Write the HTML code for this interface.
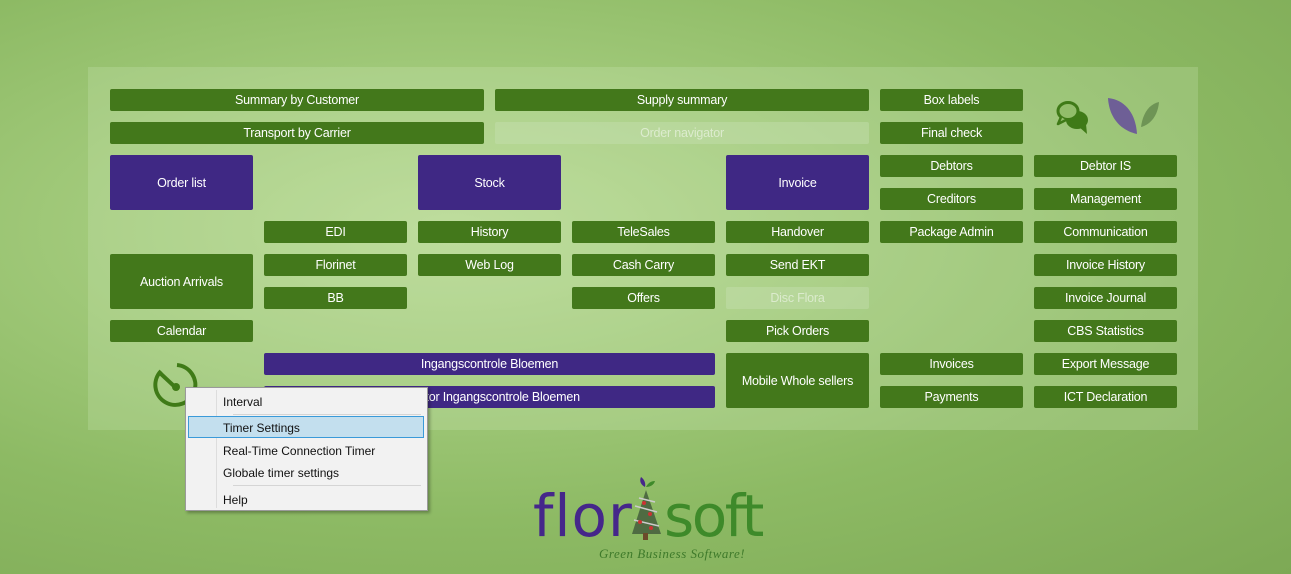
<!DOCTYPE html>
<html><head><meta charset="utf-8"><style>
*{margin:0;padding:0;box-sizing:border-box}
body{width:1291px;height:574px;overflow:hidden;position:relative;font-family:"Liberation Sans",sans-serif;
background:radial-gradient(ellipse at 35% 40%,#b8d993 0%,#a2ca7b 30%,#8dba64 60%,#7da955 100%);}
.panel{position:absolute;left:88px;top:67px;width:1110px;height:363px;background:rgba(215,235,195,0.22)}
.b{position:absolute;height:22px;width:143px;background:#43781b;color:#fff;font-size:12.5px;display:flex;align-items:center;justify-content:center;border-radius:2px;letter-spacing:-0.2px}
.p{background:#3f2884}
.t{height:55px}
.d{background:rgba(200,225,180,0.4);color:rgba(255,255,255,0.5)}
.menu{position:absolute;left:185px;top:387px;width:243px;height:124px;background:#f2f2f2;border:1px solid #9a9a9a;box-shadow:2px 2px 3px rgba(0,0,0,0.3);font-size:12px;color:#111}
.menu .g{position:absolute;left:30px;top:2px;bottom:2px;width:1px;background:#ddd}
.menu .i{position:absolute;left:37px}
.menu .s{position:absolute;left:47px;right:6px;height:1px;background:#d5d5d5}
.logo{position:absolute;top:486px;font-family:"DejaVu Sans",sans-serif;font-size:58px;line-height:60px}
</style></head><body>
<div class="panel"></div>
<div class="b" style="left:110px;top:89px;width:374px">Summary by Customer</div>
<div class="b" style="left:495px;top:89px;width:374px">Supply summary</div>
<div class="b" style="left:880px;top:89px">Box labels</div>
<div class="b" style="left:110px;top:122px;width:374px">Transport by Carrier</div>
<div class="b d" style="left:495px;top:122px;width:374px">Order navigator</div>
<div class="b" style="left:880px;top:122px">Final check</div>
<div class="b p t" style="left:110px;top:155px">Order list</div>
<div class="b p t" style="left:418px;top:155px">Stock</div>
<div class="b p t" style="left:726px;top:155px">Invoice</div>
<div class="b" style="left:880px;top:155px">Debtors</div>
<div class="b" style="left:1034px;top:155px">Debtor IS</div>
<div class="b" style="left:880px;top:188px">Creditors</div>
<div class="b" style="left:1034px;top:188px">Management</div>
<div class="b" style="left:264px;top:221px">EDI</div>
<div class="b" style="left:418px;top:221px">History</div>
<div class="b" style="left:572px;top:221px">TeleSales</div>
<div class="b" style="left:726px;top:221px">Handover</div>
<div class="b" style="left:880px;top:221px">Package Admin</div>
<div class="b" style="left:1034px;top:221px">Communication</div>
<div class="b t" style="left:110px;top:254px">Auction Arrivals</div>
<div class="b" style="left:264px;top:254px">Florinet</div>
<div class="b" style="left:418px;top:254px">Web Log</div>
<div class="b" style="left:572px;top:254px">Cash Carry</div>
<div class="b" style="left:726px;top:254px">Send EKT</div>
<div class="b" style="left:1034px;top:254px">Invoice History</div>
<div class="b" style="left:264px;top:287px">BB</div>
<div class="b" style="left:572px;top:287px">Offers</div>
<div class="b d" style="left:726px;top:287px">Disc Flora</div>
<div class="b" style="left:1034px;top:287px">Invoice Journal</div>
<div class="b" style="left:110px;top:320px">Calendar</div>
<div class="b" style="left:726px;top:320px">Pick Orders</div>
<div class="b" style="left:1034px;top:320px">CBS Statistics</div>
<div class="b p" style="left:264px;top:353px;width:451px">Ingangscontrole Bloemen</div>
<div class="b t" style="left:726px;top:353px">Mobile Whole sellers</div>
<div class="b" style="left:880px;top:353px">Invoices</div>
<div class="b" style="left:1034px;top:353px">Export Message</div>
<div class="b p" style="left:264px;top:386px;width:451px">Monitor Ingangscontrole Bloemen</div>
<div class="b" style="left:880px;top:386px">Payments</div>
<div class="b" style="left:1034px;top:386px">ICT Declaration</div>

<svg style="position:absolute;left:1054px;top:98px" width="40" height="40" viewBox="0 0 40 40">
<ellipse cx="23" cy="22" rx="11" ry="9" fill="#3f7a17"/>
<path d="M24 28l9 8-1-10z" fill="#3f7a17"/>
<ellipse cx="14" cy="13" rx="10" ry="8.5" fill="#92bd6a" stroke="#3f7a17" stroke-width="3"/>
<path d="M7 19l-3 7 8-4" fill="#92bd6a" stroke="#3f7a17" stroke-width="2.5" stroke-linejoin="round"/>
</svg>
<svg style="position:absolute;left:1105px;top:96px" width="56" height="40" viewBox="0 0 56 40">
<path d="M3 2C22 4 31 20 32 38 14 34 4 20 3 2z" fill="#6e5f96"/>
<path d="M54 6C45 8 38 16 36 31 47 28 53 18 54 6z" fill="#6e9455"/>
</svg>
<svg style="position:absolute;left:150px;top:360px" width="52" height="50" viewBox="0 0 52 50">
<path d="M11 11A20 20 0 1 0 27 5" fill="none" stroke="#3f7a17" stroke-width="4"/>
<path d="M10 13l15 14" stroke="#3f7a17" stroke-width="4"/>
<circle cx="26" cy="27" r="4" fill="#3f7a17"/>
</svg>

<div class="menu">
<div class="g"></div>
<div class="i" style="top:7px">Interval</div>
<div class="s" style="top:26px"></div>
<div style="position:absolute;left:2px;top:28px;width:236px;height:22px;background:#c3dfee;border:1px solid #3a9ad9"></div>
<div class="i" style="top:33px">Timer Settings</div>
<div class="i" style="top:56px">Real-Time Connection Timer</div>
<div class="i" style="top:78px">Globale timer settings</div>
<div class="s" style="top:97px"></div>
<div class="i" style="top:105px">Help</div>
</div>

<div class="logo" style="left:533px;color:#45278a;letter-spacing:1px">flor</div>
<div class="logo" style="left:664px;color:#3e8a2a;letter-spacing:-2.5px">soft</div>
<svg style="position:absolute;left:627px;top:476px" width="40" height="68" viewBox="0 0 40 68">
<path d="M19 14L5 58h29z" fill="#4f6b42"/>
<path d="M8 30l22 6M7 44l25 6M12 22l16 4" stroke="#ccc" stroke-width="1.5"/>
<rect x="16" y="57" width="5" height="7" fill="#6b4a2a"/>
<path d="M18 11c-4-2-6-6-4-10 3 2 5 6 4 10z" fill="#45278a"/>
<path d="M19 11c2-4 5-6 9-6-1 4-5 6-9 6z" fill="#3e8a2a"/>
<circle cx="17" cy="27" r="2" fill="#c33"/><circle cx="23" cy="38" r="2" fill="#c33"/><circle cx="13" cy="46" r="2" fill="#c33"/><circle cx="24" cy="52" r="2" fill="#c33"/>
</svg>
<div style="position:absolute;left:599px;top:546px;font-family:'Liberation Serif',serif;font-style:italic;font-size:13px;color:#3e7a2a;letter-spacing:0.5px">Green Business Software!</div>
</body></html>
